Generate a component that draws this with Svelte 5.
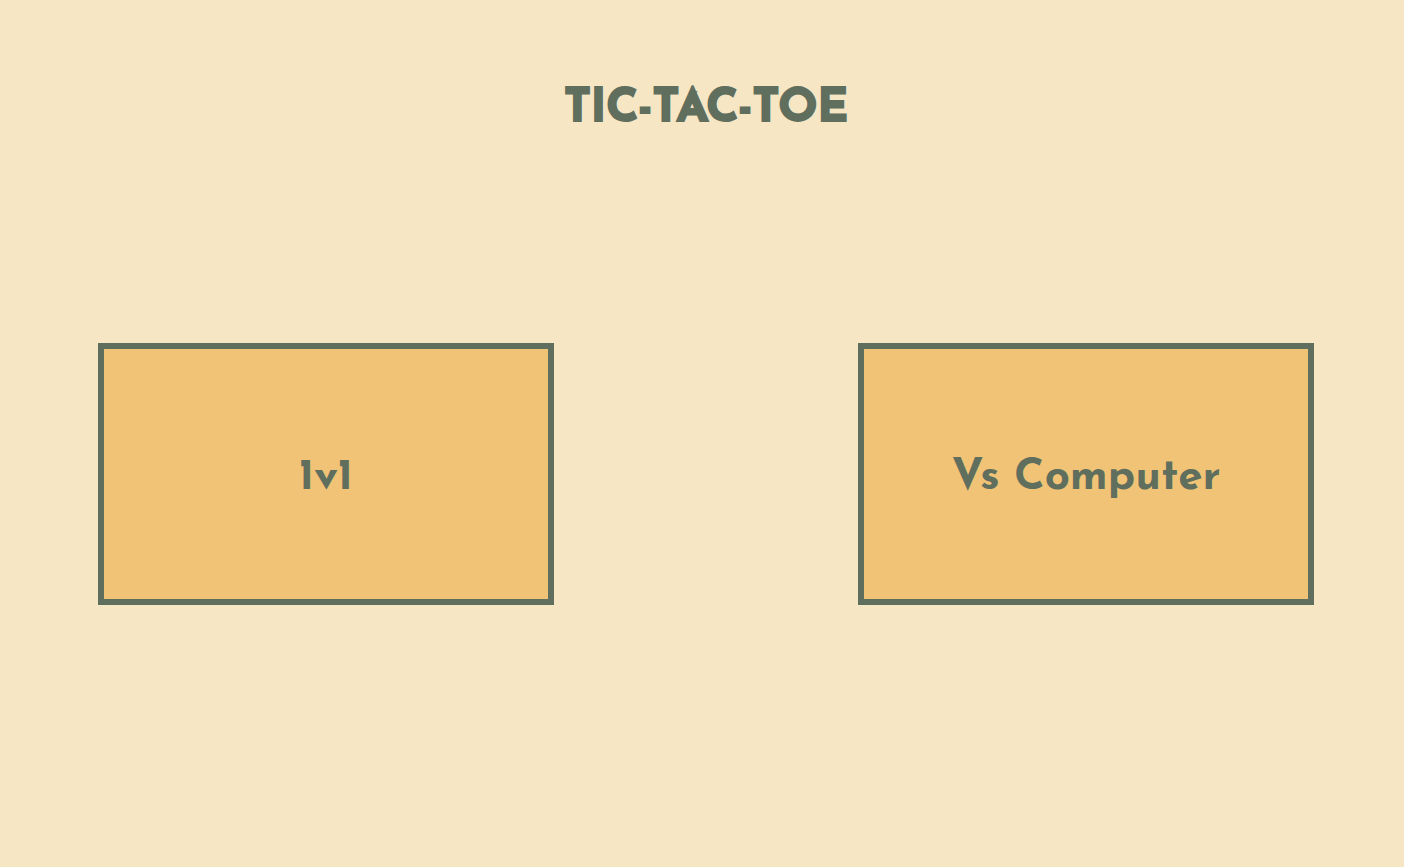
<script>
  const modes = ['1v1', 'Vs Computer'];
</script>

<main>
  <h1>TIC-TAC-TOE</h1>
  <div class="modes">
    {#each modes as mode}
      <button type="button">{mode}</button>
    {/each}
  </div>
</main>

<style>
  :global(body) {
    background: #f6e6c4;
  }

  main {
    display: flex;
    flex-direction: column;
    min-height: 100vh;
    box-sizing: border-box;
    padding: 78px 90px 0 98px;
    color: #606e5e;
    font-family: 'Josefin Sans', Lato, sans-serif;
  }

  h1 {
    margin: 0;
    font-size: 46px;
    line-height: 64px;
    font-weight: 700;
    text-align: center;
    -webkit-text-stroke: 2px currentColor;
    stroke-linejoin: round;
  }

  .modes {
    display: grid;
    grid-template-columns: 1fr 1fr;
    column-gap: 25%;
    margin-top: 201px;
  }

  button {
    min-height: 262px;
    padding: 8px 0 0;
    border: 6px solid #606e5e;
    background: #f1c376;
    color: inherit;
    font-family: inherit;
    font-size: 44px;
    font-weight: 700;
    cursor: pointer;
  }
</style>
